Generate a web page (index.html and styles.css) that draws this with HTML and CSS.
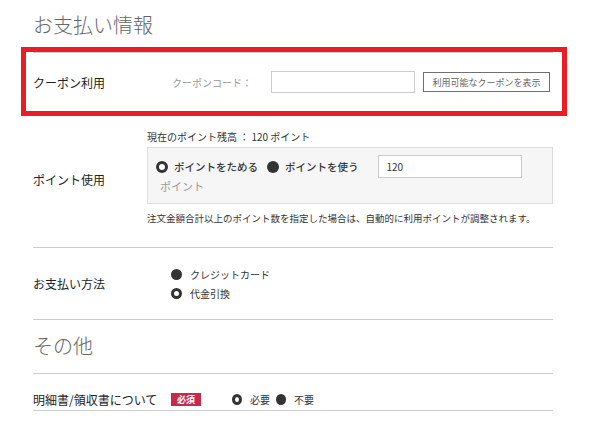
FILE: index.html
```html
<!DOCTYPE html>
<html lang="ja">
<head>
    <meta charset="UTF-8">
    <title>お支払い情報</title>
    <link rel="stylesheet" href="styles.css">
</head>
<body>
    <div class="page">
        <h2 class="section-title">お支払い情報</h2>

        <div class="row coupon-row">
            <div class="label coupon-label">クーポン利用</div>
            <div class="coupon-code">クーポンコード：</div>
            <input class="text-input" type="text">
            <button class="coupon-button">利用可能なクーポンを表示</button>
        </div>

        <div class="row point-row">
            <div class="label point-label">ポイント使用</div>
            <div class="point-body">
                <div class="point-balance">現在のポイント残高 ： 120 ポイント</div>
                <div class="point-box">
                    <div class="point-options">
                        <span class="radio checked big"></span>
                        <span class="option-text strong">ポイントをためる</span>
                        <span class="radio filled big second"></span>
                        <span class="option-text strong">ポイントを使う</span>
                        <input class="text-input point-input" type="text" value="120">
                    </div>
                    <div class="point-unit">ポイント</div>
                </div>
                <div class="point-note">注文金額合計以上のポイント数を指定した場合は、自動的に利用ポイントが調整されます。</div>
            </div>
        </div>

        <div class="row pay-row">
            <div class="label pay-label">お支払い方法</div>
            <div class="pay-options">
                <div class="pay-option"><span class="radio filled"></span><span>クレジットカード</span></div>
                <div class="pay-option"><span class="radio checked"></span><span>代金引換</span></div>
            </div>
        </div>

        <h2 class="section-title other-title">その他</h2>

        <div class="row receipt-row">
            <div class="label receipt-label">明細書/領収書について</div>
            <span class="badge">必須</span>
            <span class="radio checked small"></span>
            <span class="receipt-text">必要</span>
            <span class="radio filled small"></span>
            <span class="receipt-text">不要</span>
        </div>

        <div class="highlight"></div>
    </div>
</body>
</html>
```

FILE: styles.css
```css
body {
    margin: 0;
    background: #fff;
    font-family: "Noto Sans CJK JP", "Noto Sans", sans-serif;
    color: #333;
}

.page {
    width: 520px;
    padding-left: 33px;
}

.section-title {
    margin: 0;
    height: 52px;
    line-height: 50px;
    font-size: 20px;
    font-weight: 300;
    color: #666;
    border-bottom: 1px solid #ccc;
}

.other-title {
    height: 53px;
    line-height: 52px;
}

.row {
    display: flex;
    align-items: center;
    border-bottom: 1px solid #ccc;
}

.label {
    font-size: 12px;
    font-weight: 400;
    color: #222;
    flex-shrink: 0;
}

/* クーポン */
.coupon-row {
    height: 58px;
}

.coupon-label {
    width: 139px;
}

.coupon-code {
    width: 99px;
    font-size: 10px;
    color: #999;
}

.text-input {
    box-sizing: border-box;
    width: 144px;
    height: 22px;
    margin: 0;
    border: 1px solid #ccc;
    background: #fff;
    font-family: inherit;
    font-size: 10px;
    color: #333;
    padding: 0 8px;
}

.coupon-button {
    box-sizing: border-box;
    width: 127px;
    height: 20px;
    margin-left: 8px;
    padding: 0;
    border: 1px solid #707070;
    background: #fff;
    font-family: inherit;
    font-size: 9px;
    color: #666;
}

/* ポイント */
.point-row {
    height: 135px;
}

.point-label {
    width: 114px;
}

.point-body {
    width: 406px;
    align-self: flex-start;
    padding-top: 18px;
}

.point-balance {
    font-size: 10px;
    line-height: 14px;
}

.point-box {
    box-sizing: border-box;
    height: 57px;
    margin-top: 3px;
    padding: 7px 0 0 8px;
    background: #f6f6f6;
    border: 1px solid #ddd;
}

.point-options {
    display: flex;
    align-items: center;
    height: 23px;
}

.option-text {
    margin-left: 6px;
    font-size: 10.5px;
}

.strong {
    font-weight: 500;
}

.second {
    margin-left: 9px;
}

.point-input {
    height: 23px;
    margin-left: 19px;
}

.point-unit {
    margin-left: 4px;
    font-size: 11px;
    line-height: 16px;
    color: #999;
}

.point-note {
    margin-top: 7px;
    font-size: 9.5px;
    line-height: 14px;
}

/* ラジオ */
.radio {
    box-sizing: border-box;
    display: inline-block;
    flex-shrink: 0;
    width: 11px;
    height: 11px;
    border-radius: 50%;
    background: #333;
}

.radio.checked {
    border: 3px solid #333;
    background: #fff;
}

.radio.big {
    width: 12px;
    height: 12px;
}

.radio.small {
    width: 10px;
    height: 11px;
}

/* お支払い方法 */
.pay-row {
    height: 71px;
}

.pay-label {
    width: 138px;
}

.pay-options {
    font-size: 10px;
}

.pay-option {
    display: flex;
    align-items: center;
    gap: 8px;
    height: 19px;
}

/* その他 */
.receipt-row {
    height: 37px;
    align-items: flex-end;
    padding-bottom: 3px;
    box-sizing: border-box;
}

.receipt-label {
    width: 138px;
    line-height: 14px;
}

.badge {
    width: 30px;
    height: 13px;
    line-height: 13px;
    background: #c72a4f;
    color: #fff;
    font-size: 9px;
    font-weight: 700;
    text-align: center;
    margin-bottom: 1px;
}

.receipt-row .radio {
    margin-bottom: 2px;
}

.receipt-row .radio.checked {
    margin-left: 31px;
}

.receipt-row .radio.filled {
    margin-left: 6px;
}

.receipt-text {
    margin-left: 8px;
    font-size: 10px;
    line-height: 14px;
}

/* 注釈の赤枠 */
.highlight {
    position: absolute;
    left: 21px;
    top: 47px;
    width: 536px;
    height: 59px;
    border: 5px solid #ea1c24;
}
```
